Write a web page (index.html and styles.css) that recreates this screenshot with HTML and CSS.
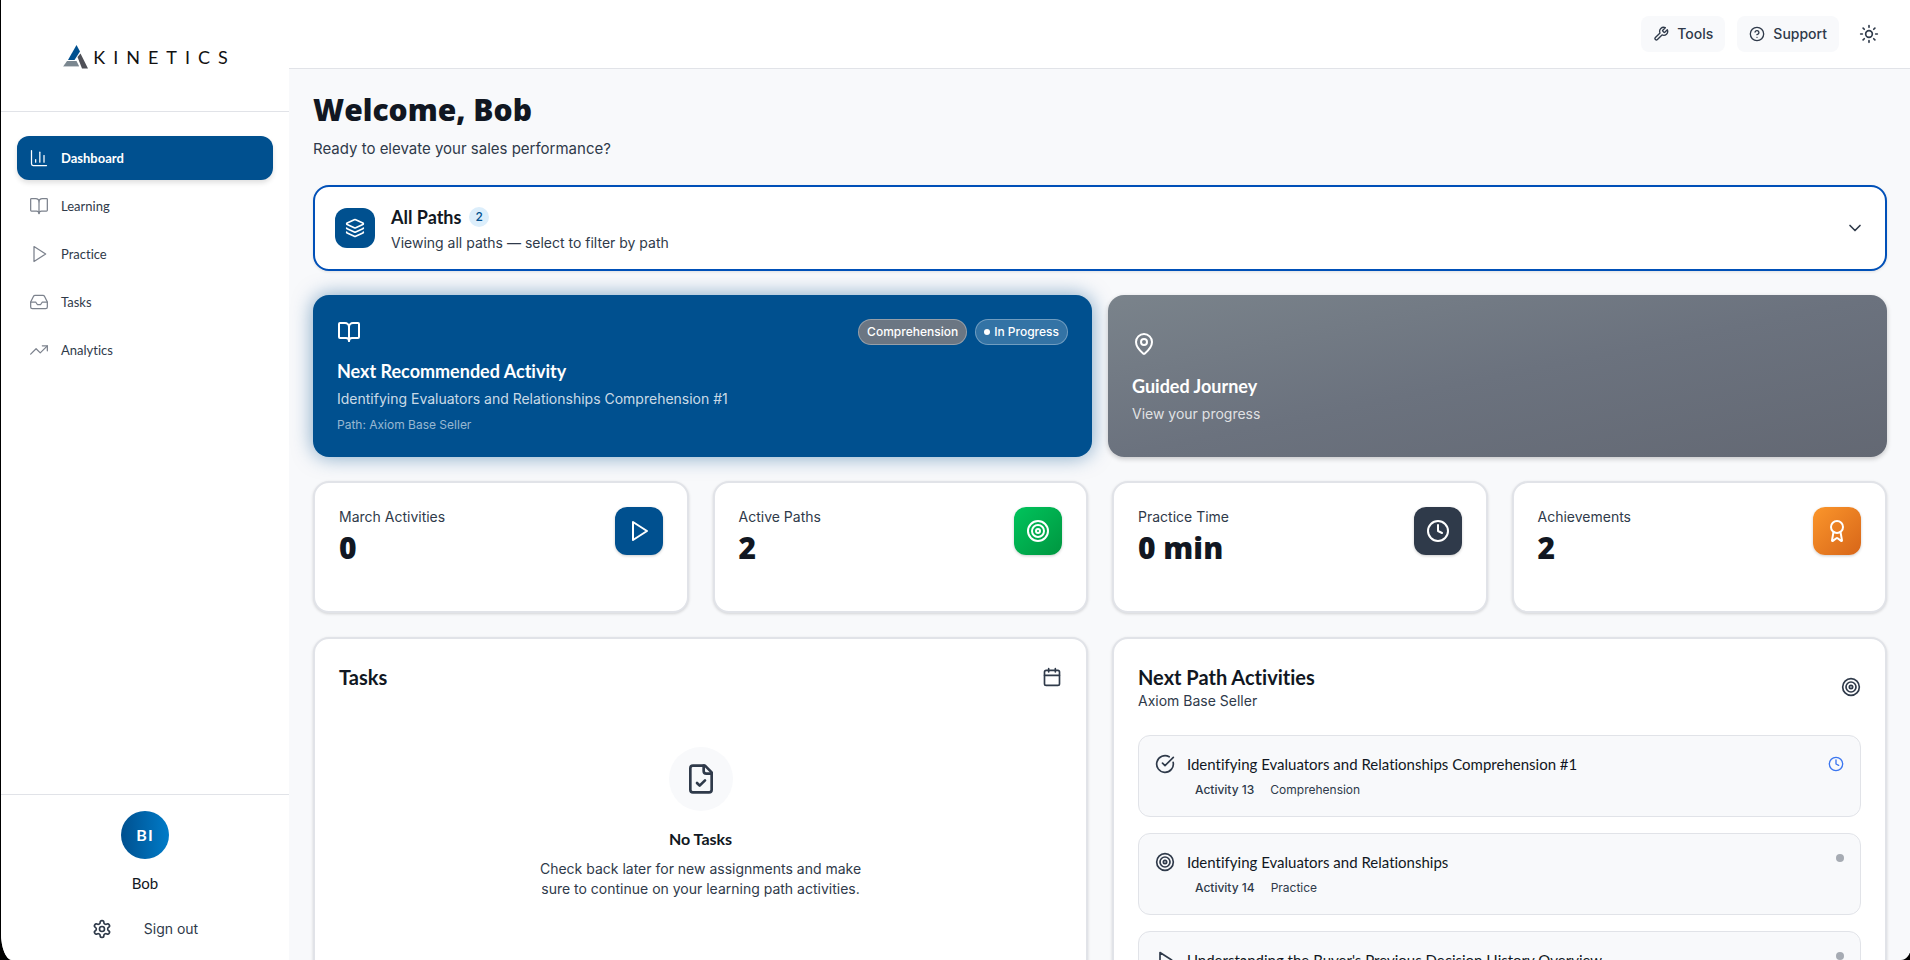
FILE: index.html
```html
<!DOCTYPE html>
<html lang="en">
<head>
    <meta charset="UTF-8">
    <meta name="viewport" content="width=device-width, initial-scale=1.0">
    <title>Kinetics - Dashboard</title>
    <link rel="stylesheet" href="styles.css">
</head>
<body>

<!-- Shared icons -->
<svg class="sprite" aria-hidden="true">
    <symbol id="i-chart" viewBox="0 0 24 24"><path d="M3 3v16a2 2 0 0 0 2 2h16"/><path d="M18 17V9"/><path d="M13 17V5"/><path d="M8 17v-3"/></symbol>
    <symbol id="i-book" viewBox="0 0 24 24"><path d="M12 7v14"/><path d="M3 18a1 1 0 0 1-1-1V4a1 1 0 0 1 1-1h5a4 4 0 0 1 4 4 4 4 0 0 1 4-4h5a1 1 0 0 1 1 1v13a1 1 0 0 1-1 1h-6a3 3 0 0 0-3 3 3 3 0 0 0-3-3z"/></symbol>
    <symbol id="i-play" viewBox="0 0 24 24"><path d="M6 3l14 9-14 9z"/></symbol>
    <symbol id="i-inbox" viewBox="0 0 24 24"><path d="M22 12h-6l-2 3h-4l-2-3H2"/><path d="M5.450 5.110 2 12v6a2 2 0 0 0 2 2h16a2 2 0 0 0 2-2v-6l-3.450-6.890A2 2 0 0 0 16.760 4H7.240a2 2 0 0 0-1.790 1.110z"/></symbol>
    <symbol id="i-trend" viewBox="0 0 24 24"><path d="M22 7l-8.500 8.500-5-5L2 17"/><path d="M16 7h6v6"/></symbol>
    <symbol id="i-gear" viewBox="0 0 24 24"><path d="M12.220 2h-.44a2 2 0 0 0-2 2v.18a2 2 0 0 1-1 1.730l-.43.25a2 2 0 0 1-2 0l-.15-.08a2 2 0 0 0-2.730.73l-.22.38a2 2 0 0 0 .73 2.730l.15.1a2 2 0 0 1 1 1.720v.51a2 2 0 0 1-1 1.740l-.15.09a2 2 0 0 0-.73 2.730l.22.38a2 2 0 0 0 2.730.73l.15-.08a2 2 0 0 1 2 0l.43.25a2 2 0 0 1 1 1.730V20a2 2 0 0 0 2 2h.44a2 2 0 0 0 2-2v-.18a2 2 0 0 1 1-1.730l.43-.25a2 2 0 0 1 2 0l.15.08a2 2 0 0 0 2.730-.73l.22-.39a2 2 0 0 0-.73-2.730l-.15-.08a2 2 0 0 1-1-1.740v-.5a2 2 0 0 1 1-1.740l.15-.09a2 2 0 0 0 .73-2.730l-.22-.38a2 2 0 0 0-2.730-.73l-.15.08a2 2 0 0 1-2 0l-.43-.25a2 2 0 0 1-1-1.730V4a2 2 0 0 0-2-2z"/><circle cx="12" cy="12" r="3"/></symbol>
    <symbol id="i-wrench" viewBox="0 0 24 24"><path d="M14.700 6.300a1 1 0 0 0 0 1.400l1.600 1.600a1 1 0 0 0 1.400 0l3.770-3.770a6 6 0 0 1-7.940 7.940l-6.910 6.910a2.120 2.120 0 0 1-3-3l6.910-6.910a6 6 0 0 1 7.940-7.940l-3.760 3.760z"/></symbol>
    <symbol id="i-help" viewBox="0 0 24 24"><circle cx="12" cy="12" r="10"/><path d="M9.090 9a3 3 0 0 1 5.830 1c0 2-3 3-3 3"/><path d="M12 17h.01"/></symbol>
    <symbol id="i-sun" viewBox="0 0 24 24"><circle cx="12" cy="12" r="4"/><path d="M12 2v2M12 20v2M4.930 4.930l1.410 1.410M17.660 17.660l1.410 1.410M2 12h2M20 12h2M6.340 17.660l-1.410 1.410M19.070 4.930l-1.410 1.410"/></symbol>
    <symbol id="i-layers" viewBox="0 0 24 24"><path d="M12.830 2.180a2 2 0 0 0-1.660 0L2.600 6.080a1 1 0 0 0 0 1.830l8.580 3.910a2 2 0 0 0 1.660 0l8.580-3.900a1 1 0 0 0 0-1.830z"/><path d="M2 12a1 1 0 0 0 .58.91l8.600 3.910a2 2 0 0 0 1.650 0l8.580-3.900A1 1 0 0 0 22 12"/><path d="M2 17a1 1 0 0 0 .58.91l8.600 3.910a2 2 0 0 0 1.650 0l8.580-3.900A1 1 0 0 0 22 17"/></symbol>
    <symbol id="i-down" viewBox="0 0 24 24"><path d="M6 9l6 6 6-6"/></symbol>
    <symbol id="i-pin" viewBox="0 0 24 24"><path d="M20 10c0 4.990-5.540 10.190-7.400 11.800a1 1 0 0 1-1.200 0C9.540 20.190 4 14.990 4 10a8 8 0 0 1 16 0"/><circle cx="12" cy="10" r="3"/></symbol>
    <symbol id="i-target" viewBox="0 0 24 24"><circle cx="12" cy="12" r="10"/><circle cx="12" cy="12" r="6"/><circle cx="12" cy="12" r="2"/></symbol>
    <symbol id="i-clock" viewBox="0 0 24 24"><circle cx="12" cy="12" r="10"/><path d="M12 6v6l4 2"/></symbol>
    <symbol id="i-award" viewBox="0 0 24 24"><path d="M15.480 12.890l1.510 8.530a.5.500 0 0 1-.81.470l-3.580-2.690a1 1 0 0 0-1.200 0l-3.590 2.690a.5.500 0 0 1-.81-.470l1.510-8.530"/><circle cx="12" cy="8" r="6"/></symbol>
    <symbol id="i-calendar" viewBox="0 0 24 24"><path d="M8 2v4M16 2v4M3 10h18"/><rect x="3" y="4" width="18" height="18" rx="2"/></symbol>
    <symbol id="i-filecheck" viewBox="0 0 24 24"><path d="M15 2H6a2 2 0 0 0-2 2v16a2 2 0 0 0 2 2h12a2 2 0 0 0 2-2V7z"/><path d="M14 2v4a2 2 0 0 0 2 2h4"/><path d="M9 15l2 2 4-4"/></symbol>
    <symbol id="i-check" viewBox="0 0 24 24"><path d="M21.800 10A10 10 0 1 1 17 3.340"/><path d="M9 11l3 3L22 4"/></symbol>
</svg>

<div class="app">
    <aside class="sidebar">
        <div class="brand">
            <svg class="brand-mark" viewBox="0 0 26 24" aria-hidden="true">
                <path fill="#00508f" d="M14.500 0l3.500 6.500L12.500 15H6z"/>
                <path fill="#7b8790" d="M5 16h9.500l2.500 5H1.500z"/>
                <path fill="#c9cdd1" d="M1.500 21H17v1H1z"/>
                <path fill="#4f5057" d="M15.500 12l3-3.500L26 23.500h-6z"/>
            </svg>
            <span class="brand-name">KINETICS</span>
        </div>

        <nav class="nav">
            <a href="#" class="nav-link active"><svg class="icon"><use href="#i-chart"/></svg>Dashboard</a>
            <a href="#" class="nav-link"><svg class="icon"><use href="#i-book"/></svg>Learning</a>
            <a href="#" class="nav-link"><svg class="icon"><use href="#i-play"/></svg>Practice</a>
            <a href="#" class="nav-link"><svg class="icon"><use href="#i-inbox"/></svg>Tasks</a>
            <a href="#" class="nav-link"><svg class="icon"><use href="#i-trend"/></svg>Analytics</a>
        </nav>

        <div class="account">
            <div class="avatar">BI</div>
            <div class="account-name">Bob</div>
            <div class="account-actions">
                <button class="ghost" aria-label="Settings"><svg class="icon"><use href="#i-gear"/></svg></button>
                <button class="ghost">Sign out</button>
            </div>
        </div>
    </aside>

    <div class="page">
        <header class="topbar">
            <button class="top-button"><svg class="icon small"><use href="#i-wrench"/></svg>Tools</button>
            <button class="top-button"><svg class="icon small"><use href="#i-help"/></svg>Support</button>
            <button class="theme-button" aria-label="Toggle theme"><svg class="icon"><use href="#i-sun"/></svg></button>
        </header>

        <main class="content">
            <div class="welcome">
                <h1>Welcome, Bob</h1>
                <p>Ready to elevate your sales performance?</p>
            </div>

            <!-- Path filter -->
            <button class="paths">
                <span class="paths-icon"><svg class="icon"><use href="#i-layers"/></svg></span>
                <span class="paths-text">
                    <span class="paths-title">All Paths <span class="count">2</span></span>
                    <span class="paths-sub">Viewing all paths — select to filter by path</span>
                </span>
                <svg class="icon"><use href="#i-down"/></svg>
            </button>

            <div class="heroes">
                <a href="#" class="hero hero-blue">
                    <div class="hero-top">
                        <svg class="icon large"><use href="#i-book"/></svg>
                        <div class="badges">
                            <span class="badge badge-grey">Comprehension</span>
                            <span class="badge"><span class="badge-dot"></span>In Progress</span>
                        </div>
                    </div>
                    <h2>Next Recommended Activity</h2>
                    <p>Identifying Evaluators and Relationships Comprehension #1</p>
                    <p class="hero-path">Path: Axiom Base Seller</p>
                </a>
                <a href="#" class="hero hero-grey">
                    <svg class="icon large"><use href="#i-pin"/></svg>
                    <h2>Guided Journey</h2>
                    <p>View your progress</p>
                </a>
            </div>

            <div class="stats">
                <section class="card stat">
                    <div>
                        <p class="stat-label">March Activities</p>
                        <p class="stat-value">0</p>
                    </div>
                    <div class="stat-icon blue"><svg class="icon large"><use href="#i-play"/></svg></div>
                </section>
                <section class="card stat">
                    <div>
                        <p class="stat-label">Active Paths</p>
                        <p class="stat-value">2</p>
                    </div>
                    <div class="stat-icon green"><svg class="icon large"><use href="#i-target"/></svg></div>
                </section>
                <section class="card stat">
                    <div>
                        <p class="stat-label">Practice Time</p>
                        <p class="stat-value">0 min</p>
                    </div>
                    <div class="stat-icon dark"><svg class="icon large"><use href="#i-clock"/></svg></div>
                </section>
                <section class="card stat">
                    <div>
                        <p class="stat-label">Achievements</p>
                        <p class="stat-value">2</p>
                    </div>
                    <div class="stat-icon orange"><svg class="icon large"><use href="#i-award"/></svg></div>
                </section>
            </div>

            <div class="panels">
                <section class="card">
                    <div class="panel-head">
                        <h2>Tasks</h2>
                        <svg class="icon"><use href="#i-calendar"/></svg>
                    </div>
                    <div class="empty">
                        <div class="empty-icon"><svg class="icon huge"><use href="#i-filecheck"/></svg></div>
                        <h3>No Tasks</h3>
                        <p>Check back later for new assignments and make sure to continue on your learning path activities.</p>
                    </div>
                </section>

                <section class="card">
                    <div class="panel-head">
                        <div>
                            <h2>Next Path Activities</h2>
                            <p>Axiom Base Seller</p>
                        </div>
                        <svg class="icon"><use href="#i-target"/></svg>
                    </div>
                    <div class="activities">
                        <a href="#" class="activity">
                            <svg class="icon activity-icon"><use href="#i-check"/></svg>
                            <div class="activity-body">
                                <h3>Identifying Evaluators and Relationships Comprehension #1</h3>
                                <div class="activity-meta"><b>Activity 13</b><span>Comprehension</span></div>
                            </div>
                            <svg class="icon small status-clock"><use href="#i-clock"/></svg>
                        </a>
                        <a href="#" class="activity">
                            <svg class="icon activity-icon"><use href="#i-target"/></svg>
                            <div class="activity-body">
                                <h3>Identifying Evaluators and Relationships</h3>
                                <div class="activity-meta"><b>Activity 14</b><span>Practice</span></div>
                            </div>
                            <span class="status-dot"></span>
                        </a>
                        <a href="#" class="activity">
                            <svg class="icon activity-icon"><use href="#i-play"/></svg>
                            <div class="activity-body">
                                <h3>Understanding the Buyer's Previous Decision History Overview</h3>
                            </div>
                            <span class="status-dot"></span>
                        </a>
                    </div>
                </section>
            </div>
        </main>
    </div>
</div>

</body>
</html>
```

FILE: styles.css
```css
* {
    box-sizing: border-box;
}

html, body {
    height: 100%;
    margin: 0;
    overflow: hidden;
}

body {
    background-color: #000;
    color: #2f3a4a;
    font-family: Inter, sans-serif;
    font-size: 14px;
    line-height: 20px;
    font-variant-ligatures: none;
}

h1, h2, h3, p {
    margin: 0;
}

h1, h2, h3 {
    color: #111722;
    font-family: Lato, sans-serif;
}

a {
    color: inherit;
    text-decoration: none;
}

button {
    border: none;
    background: none;
    padding: 0;
    color: inherit;
    font: inherit;
    text-align: left;
    cursor: pointer;
}

.sprite {
    display: none;
}

/* Icons */
.icon {
    width: 20px;
    height: 20px;
    flex-shrink: 0;
    display: block;
    fill: none;
    stroke: currentColor;
    stroke-width: 2;
    stroke-linecap: round;
    stroke-linejoin: round;
}

.icon.small {
    width: 16px;
    height: 16px;
}

.icon.large {
    width: 24px;
    height: 24px;
}

.icon.huge {
    width: 32px;
    height: 32px;
}

/* Layout */
.app {
    display: flex;
    width: 100%;
    height: 100vh;
    margin-left: 1px;
    overflow: hidden;
    background-color: #f8f9fb;
    border-radius: 0 0 10px 11px / 0 0 14px 27px;
}

.sidebar {
    display: flex;
    flex-direction: column;
    width: 288px;
    flex-shrink: 0;
    background-color: #fff;
}

.page {
    display: flex;
    flex-direction: column;
    flex: 1;
    min-width: 0;
}

/* Sidebar */
.brand {
    display: flex;
    align-items: center;
    justify-content: center;
    gap: 5px;
    height: 112px;
    padding-top: 2px;
    border-bottom: 1px solid #e1e3e8;
}

.brand-mark {
    width: 26px;
    height: 24px;
}

.brand-name {
    color: #111;
    font-family: Lato, sans-serif;
    font-size: 18px;
    letter-spacing: 8px;
    margin-right: -8px;
}

.nav {
    display: flex;
    flex-direction: column;
    flex: 1;
    gap: 4px;
    padding: 24px 16px;
}

.nav-link {
    display: flex;
    align-items: center;
    gap: 12px;
    padding: 12px;
    border-radius: 12px;
    font-family: Lato, sans-serif;
    font-size: 13px;
}

.nav-link .icon {
    color: #7c828d;
    stroke-width: 1.5;
}

.nav-link.active {
    background-color: #00508f;
    color: #fff;
    font-weight: bold;
    box-shadow: 0 3px 5px rgba(0, 0, 0, 0.12);
}

.nav-link.active .icon {
    color: #fff;
}

.account {
    display: flex;
    flex-direction: column;
    align-items: center;
    gap: 12px;
    padding: 16px 16px 9px;
    border-top: 1px solid #e1e3e8;
}

.avatar {
    display: flex;
    align-items: center;
    justify-content: center;
    width: 48px;
    height: 48px;
    border-radius: 50%;
    background: linear-gradient(90deg, #00508f, #007bc8);
    color: #fff;
    font-family: Lato, sans-serif;
    font-size: 16px;
    font-weight: bold;
    letter-spacing: 1px;
}

.account-name {
    color: #111722;
    font-family: Lato, sans-serif;
    font-size: 15px;
    line-height: 24px;
}

.account-actions {
    display: flex;
}

.ghost {
    height: 44px;
    padding: 0 16px;
}

/* Top bar */
.topbar {
    display: flex;
    justify-content: flex-end;
    gap: 12px;
    padding: 16px 24px;
    background-color: #fff;
    border-bottom: 1px solid #e1e3e8;
}

.top-button {
    display: flex;
    align-items: center;
    gap: 8px;
    height: 36px;
    padding: 0 12px;
    border-radius: 8px;
    background-color: #f8f9fb;
    font-weight: 500;
}

.theme-button {
    height: 36px;
    padding: 0 8px;
}

/* Content */
.content {
    display: flex;
    flex-direction: column;
    flex: 1;
    min-height: 0;
    gap: 24px;
    padding: 24px;
    overflow: hidden;
}

.content > * {
    flex-shrink: 0;
}

.welcome h1 {
    font-family: "Open Sans", sans-serif;
    font-size: 30px;
    font-weight: 800;
    line-height: 34px;
}

.welcome p {
    margin-top: 10px;
    font-size: 15px;
    line-height: 24px;
}

.paths {
    display: flex;
    align-items: center;
    gap: 16px;
    padding: 16px 20px;
    border: 2px solid #0050b8;
    border-radius: 16px;
    background-color: #fff;
    box-shadow: 0 1px 3px rgba(0, 0, 0, 0.1);
}

.paths-icon {
    display: flex;
    align-items: center;
    justify-content: center;
    width: 40px;
    height: 40px;
    border-radius: 12px;
    background-color: #00508f;
    color: #fff;
}

.paths-text {
    display: flex;
    flex-direction: column;
    flex: 1;
    gap: 2px;
}

.paths-title {
    display: flex;
    align-items: center;
    gap: 8px;
    color: #111722;
    font-family: Lato, sans-serif;
    font-size: 18px;
    font-weight: bold;
    line-height: 28px;
}

.count {
    padding: 2px 6px;
    border-radius: 10px;
    background-color: #dceefb;
    color: #00508f;
    font-family: Inter, sans-serif;
    font-size: 12px;
    font-weight: 500;
    line-height: 16px;
}

/* Hero cards */
.heroes {
    display: grid;
    grid-template-columns: 1fr 1fr;
    gap: 16px;
}

.hero {
    display: flex;
    flex-direction: column;
    justify-content: center;
    padding: 24px;
    border-radius: 16px;
    color: #fff;
}

.hero-blue {
    background-color: #00508f;
    box-shadow: 0 0 20px rgba(0, 80, 143, 0.5);
}

.hero-grey {
    padding-top: 28px;
    background: linear-gradient(to bottom right, #7a838b, #6b727e 50%, #636873);
    box-shadow: 0 2px 5px rgba(0, 0, 0, 0.2);
}

.hero-top {
    display: flex;
    align-items: center;
    justify-content: space-between;
}

.hero h2 {
    margin-top: 12px;
    color: #fff;
    font-size: 18px;
    line-height: 28px;
}

.hero-grey h2 {
    margin-top: 16px;
}

.hero p {
    margin-top: 4px;
    color: rgba(255, 255, 255, 0.8);
}

.hero .hero-path {
    margin-top: 8px;
    color: rgba(255, 255, 255, 0.6);
    font-size: 12px;
    line-height: 16px;
}

.badges {
    display: flex;
    gap: 8px;
}

.badge {
    display: flex;
    align-items: center;
    gap: 4px;
    padding: 4px 8px;
    border: 1px solid rgba(255, 255, 255, 0.3);
    border-radius: 13px;
    background-color: rgba(255, 255, 255, 0.2);
    font-size: 12px;
    font-weight: 500;
    line-height: 16px;
}

.badge-grey {
    background-color: #6b7683;
}

.badge-dot {
    width: 6px;
    height: 6px;
    border-radius: 50%;
    background-color: #fff;
}

/* Cards */
.card {
    padding: 24px;
    border: 2px solid #e1e3e8;
    border-radius: 16px;
    background-color: #fff;
    box-shadow: 0 1px 3px rgba(0, 0, 0, 0.15);
}

.stats {
    display: grid;
    grid-template-columns: repeat(4, 1fr);
    gap: 24px;
}

.stat {
    display: flex;
    align-items: flex-start;
    justify-content: space-between;
    min-height: 132px;
}

.stat-value {
    margin-top: 4px;
    color: #111722;
    font-family: "Open Sans", sans-serif;
    font-size: 30px;
    font-weight: 800;
    line-height: 34px;
}

.stat-icon {
    display: flex;
    align-items: center;
    justify-content: center;
    width: 48px;
    height: 48px;
    border-radius: 12px;
    color: #fff;
    box-shadow: 0 1px 3px rgba(0, 0, 0, 0.2);
}

.blue {
    background-color: #00508f;
}

.green {
    background: linear-gradient(135deg, #00c45c, #009640);
}

.dark {
    background-color: #2f3a4a;
}

.orange {
    background: linear-gradient(135deg, #fb962b, #d76619);
}

.panels {
    display: grid;
    grid-template-columns: 1fr 1fr;
    gap: 24px;
}

.panel-head {
    display: flex;
    align-items: center;
    justify-content: space-between;
}

.panel-head h2 {
    font-size: 20px;
    line-height: 28px;
}

.empty {
    display: flex;
    flex-direction: column;
    align-items: center;
    padding: 56px 0;
    text-align: center;
}

.empty-icon {
    display: flex;
    align-items: center;
    justify-content: center;
    width: 64px;
    height: 64px;
    border-radius: 50%;
    background-color: #f8f9fb;
}

.empty h3 {
    margin-top: 16px;
    font-size: 16px;
    line-height: 24px;
}

.empty p {
    max-width: 336px;
    margin-top: 8px;
}

.activities {
    display: flex;
    flex-direction: column;
    gap: 16px;
    margin-top: 24px;
}

.activity {
    display: flex;
    align-items: flex-start;
    gap: 12px;
    min-height: 82px;
    padding: 16px;
    border: 1px solid #e1e3e8;
    border-radius: 12px;
    background-color: #f8f9fb;
}

.activity-icon {
    margin-top: 2px;
}

.activity-body {
    flex: 1;
}

.activity h3 {
    font-size: 15px;
    font-weight: normal;
    line-height: 24px;
}

.activity-meta {
    display: flex;
    gap: 16px;
    padding: 6px 8px 2px;
    font-size: 12px;
    line-height: 16px;
}

.activity-meta b {
    font-weight: 500;
}

.status-clock {
    margin-top: 4px;
    color: #3b76f0;
}

.status-dot {
    width: 8px;
    height: 8px;
    margin-top: 4px;
    border-radius: 50%;
    background-color: #a6abb3;
}
```
